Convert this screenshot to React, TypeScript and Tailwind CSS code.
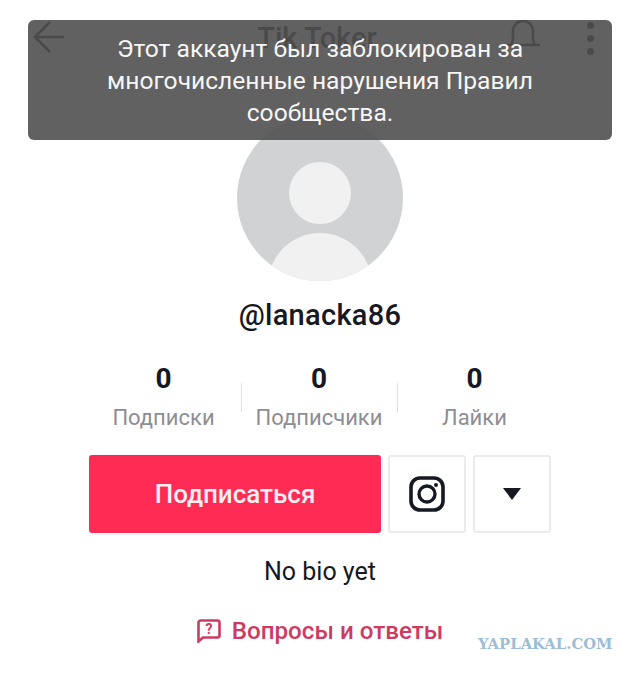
const stats = [
  { value: '0', label: 'Подписки' },
  { value: '0', label: 'Подписчики' },
  { value: '0', label: 'Лайки' },
]

export default function App() {
  return (
    <div className="relative h-[673px] w-[640px] overflow-hidden bg-white font-['Roboto',sans-serif] text-[#161823]">
      {/* Header sits behind the toast */}
      <header className="flex h-[115px] items-start justify-between pl-[32px] pr-[46px] pt-[20px]">
        <svg width="34" height="34" viewBox="0 0 34 34" fill="none" stroke="#161823" strokeWidth="2.6">
          <path d="M32 17H3M18 2 3 17l15 15" />
        </svg>
        <div className="ml-[62px] text-[29px] font-medium leading-[36px]">Tik Toker</div>
        <div className="flex items-start gap-[47px]">
          <svg width="34" height="28" viewBox="0 0 34 28" fill="none" stroke="#161823" strokeWidth="2.6">
            <path d="M0 25h34M5 25c1-2 2-3 2-6v-8a10 10 0 0 1 20 0v8c0 3 1 4 2 6" />
          </svg>
          <div className="flex flex-col gap-[6px] pt-[2px]">
            <span className="size-[7px] rounded-full bg-[#161823]" />
            <span className="size-[7px] rounded-full bg-[#161823]" />
            <span className="size-[7px] rounded-full bg-[#161823]" />
          </div>
        </div>
      </header>

      <main className="flex flex-col items-center">
        <div className="relative size-[166px] overflow-hidden rounded-full bg-[#d0d2d3]">
          <div className="absolute left-[52px] top-[47px] size-[62px] rounded-full bg-[#f1f1f1]" />
          <div className="absolute left-[31px] top-[118px] h-[104px] w-[104px] rounded-full bg-[#f1f1f1]" />
        </div>

        <div className="mt-[17px] text-[29px] font-medium leading-[34px] tracking-[0.3px]">@lanacka86</div>

        <div className="mt-[30px] grid w-[466px] -translate-x-[1px] grid-cols-[155px_156px_155px]">
          {stats.map((s, i) => (
            <div key={s.label} className="relative flex flex-col items-center">
              <div className="text-[28px] font-bold leading-[34px]">{s.value}</div>
              <div className="mt-[8px] whitespace-nowrap text-[22px] leading-[28px] text-[#8d8e93]">{s.label}</div>
              {i < 2 && <span className="absolute right-[-1px] top-[21px] h-[29px] w-px bg-[#dedfe0]" />}
            </div>
          ))}
        </div>

        <div className="mt-[23px] flex h-[78px] items-stretch gap-[7px]">
          <button className="flex w-[292px] items-center justify-center rounded-[3px] bg-[#fe2c55] text-[26px] font-medium text-[#fbeef1]">
            Подписаться
          </button>
          <button className="flex w-[78px] items-center justify-center rounded-[3px] border-2 border-[#ebebec]">
            <svg width="36" height="36" viewBox="0 0 36 36" fill="none" stroke="#161823">
              <rect x="2" y="2" width="32" height="32" rx="9" strokeWidth="3.6" />
              <circle cx="18" cy="18" r="8" strokeWidth="3.4" />
              <circle cx="27" cy="9" r="2" fill="#161823" stroke="none" />
            </svg>
          </button>
          <button className="flex w-[78px] items-center justify-center rounded-[3px] border-2 border-[#ebebec]">
            <svg width="18" height="12" viewBox="0 0 18 12" fill="#161823">
              <path d="M0 0h18L9 12z" />
            </svg>
          </button>
        </div>

        <div className="mt-[24px] text-[25px] leading-[30px]">No bio yet</div>

        <div className="mt-[29px] flex items-center gap-[11px] text-[24.2px] font-medium leading-[30px] text-[#ce3b62]">
          <svg width="24" height="24" viewBox="0 0 24 24" fill="none" stroke="#ce3b62" strokeWidth="2.6">
            <path d="M1.5 22.5V3.5a2 2 0 0 1 2-2h17a2 2 0 0 1 2 2v13a2 2 0 0 1-2 2H6z" />
            <text x="12" y="15" fontSize="14" fontWeight="700" fill="#ce3b62" stroke="none" textAnchor="middle">?</text>
          </svg>
          Вопросы и ответы
        </div>
      </main>

      <div className="absolute left-[478px] top-[636px] font-['DejaVu_Serif',serif] text-[14.8px] font-bold leading-[16px] text-[#9dbdd6]">
        YAPLAKAL.COM
      </div>

      {/* Toast */}
      <div className="absolute left-[28px] right-[28px] top-[20px] flex h-[120px] items-center justify-center rounded-[6px] bg-[#505050]/90 pt-[1px] text-center text-[24.6px] leading-[32px] text-[#f6f6f6]">
        <p>
          Этот аккаунт был заблокирован за
          <br />
          многочисленные нарушения Правил
          <br />
          сообщества.
        </p>
      </div>
    </div>
  )
}
